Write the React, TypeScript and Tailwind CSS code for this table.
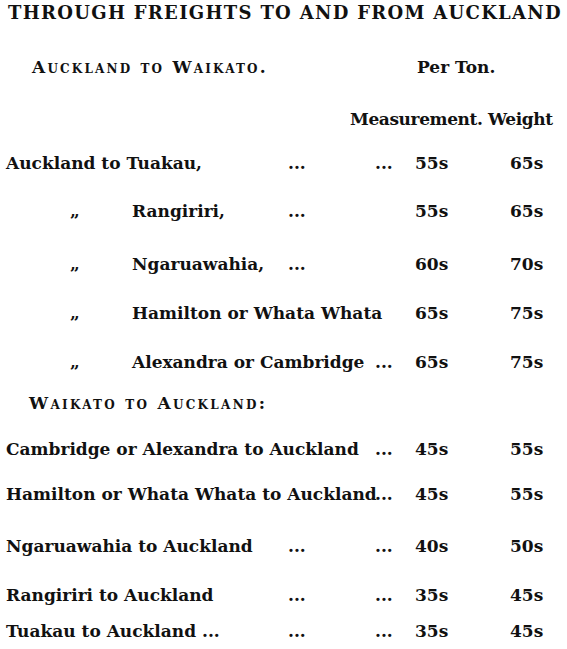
const serif = { fontFamily: '"DejaVu Serif", "Liberation Serif", serif' };

type Row = {
  label: string;
  ditto?: boolean;
  mid?: boolean;
  trail?: string;
  meas: string;
  weight: string;
  mt: string;
};

const TO_WAIKATO: Row[] = [
  { label: "Auckland to Tuakau,", mid: true, meas: "55s", weight: "65s", mt: "mt-[24px]" },
  { label: "Rangiriri,", ditto: true, mid: true, meas: "55s", weight: "65s", mt: "mt-[28px]" },
  { label: "Ngaruawahia,", ditto: true, mid: true, meas: "60s", weight: "70s", mt: "mt-[33px]" },
  { label: "Hamilton or Whata Whata", ditto: true, meas: "65s", weight: "75s", mt: "mt-[29px]" },
  { label: "Alexandra or Cambridge", ditto: true, trail: "...", meas: "65s", weight: "75s", mt: "mt-[29px]" },
];

const TO_AUCKLAND: Row[] = [
  { label: "Cambridge or Alexandra to Auckland", trail: "...", meas: "45s", weight: "55s", mt: "mt-[26px]" },
  { label: "Hamilton or Whata Whata to Auckland", trail: "...", meas: "45s", weight: "55s", mt: "mt-[25px]" },
  { label: "Ngaruawahia to Auckland", mid: true, trail: "...", meas: "40s", weight: "50s", mt: "mt-[32px]" },
  { label: "Rangiriri to Auckland", mid: true, trail: "...", meas: "35s", weight: "45s", mt: "mt-[29px]" },
  { label: "Tuakau to Auckland ...", mid: true, trail: "...", meas: "35s", weight: "45s", mt: "mt-[16px]" },
];

function FreightRow({ r }: { r: Row }) {
  return (
    <div className={`grid h-[20px] grid-cols-[375px_40px_95px_1fr] leading-[20px] ${r.mt}`}>
      <div className="grid grid-cols-[288px_1fr]">
        <div className={`flex whitespace-nowrap ${r.mid ? "" : "col-span-2"} ${r.ditto ? "" : "pl-[6px]"}`}>
          {r.ditto && <span className="w-[132px] shrink-0 pl-[70px]">„</span>}
          <span>{r.label}</span>
        </div>
        {r.mid && <span>...</span>}
      </div>
      <span>{r.ditto && !r.trail ? "" : "..."}</span>
      <span>{r.meas}</span>
      <span>{r.weight}</span>
    </div>
  );
}

export default function App() {
  return (
    <div className="h-[649px] w-[567px] overflow-hidden bg-white pt-[3px] text-[17px] font-bold text-[#111]" style={serif}>
      <h1 className="h-[20px] whitespace-nowrap pl-[8px] text-[18px] leading-[20px] tracking-[1.3px]">
        THROUGH FREIGHTS TO AND FROM AUCKLAND
      </h1>

      <div className="mt-[34px] flex h-[20px] leading-[20px]">
        <span className="w-[417px] pl-[32px] tracking-[2.2px] [font-variant:small-caps]">Auckland to Waikato.</span>
        <span>Per Ton.</span>
      </div>
      <div className="mt-[32px] h-[20px] pl-[350px] leading-[20px] tracking-[-0.4px]">Measurement. Weight</div>

      {TO_WAIKATO.map((r) => <FreightRow key={r.label} r={r} />)}

      <div className="mt-[21px] h-[20px] pl-[29px] leading-[20px] tracking-[2.3px] [font-variant:small-caps]">Waikato to Auckland:</div>

      {TO_AUCKLAND.map((r) => <FreightRow key={r.label} r={r} />)}
    </div>
  );
}
